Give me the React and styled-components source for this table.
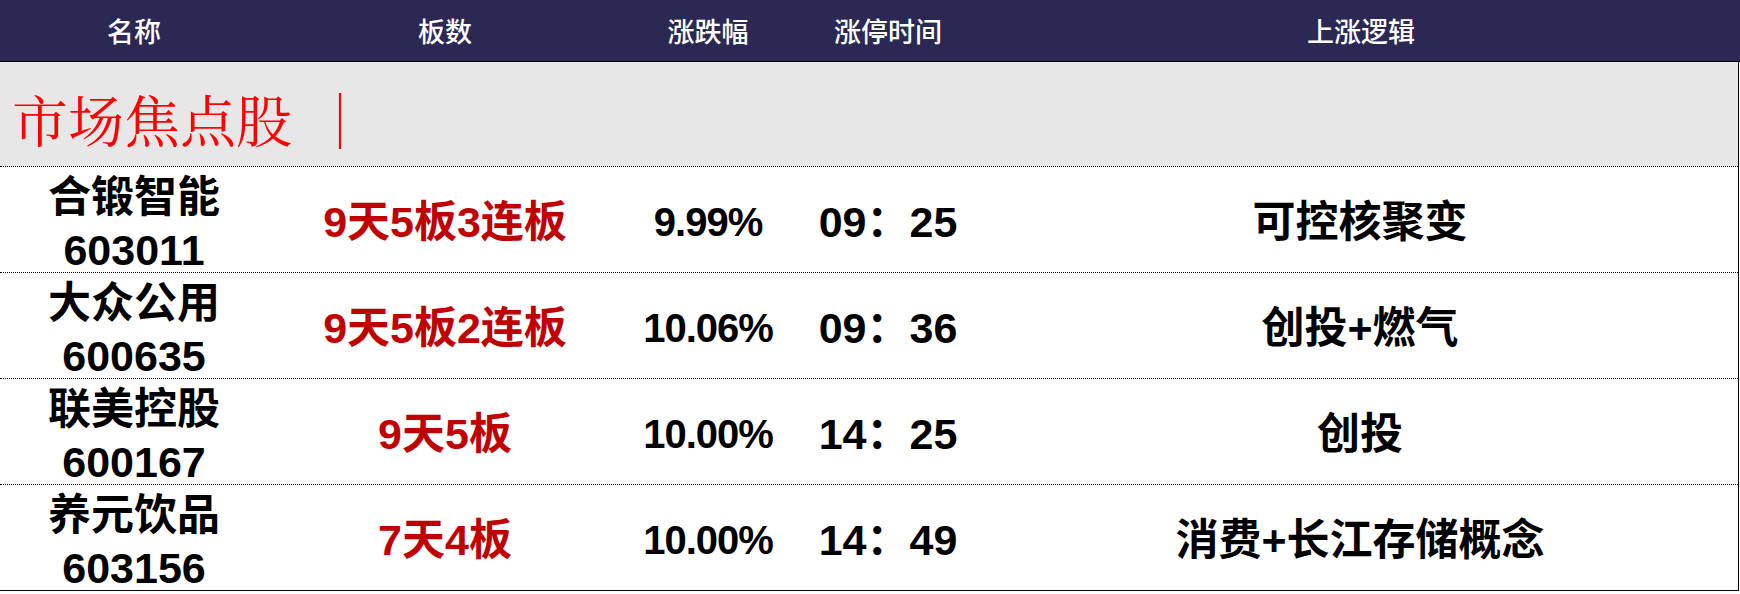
import React from "react"
import styled, { createGlobalStyle } from "styled-components"

//Styles
const GlobalStyle = createGlobalStyle`
  html, body {
    margin: 0;
    padding: 0;
    background: #ffffff;
  }
`
const cols = "268px 354px 172px 188px 1fr"
const cjk = `"Liberation Sans", "Noto Sans CJK SC", sans-serif`

const Table = styled.div`
  width: 1740px;
  font-family: ${cjk};
`
const Header = styled.div`
  display: grid;
  grid-template-columns: ${cols};
  height: 61px;
  background-color: #2b2953;
  border-bottom: 1px solid #000;
  color: #fff;
  font-size: 27px;
  font-weight: 500;
`
const HeadCell = styled.div`
  display: flex;
  align-items: center;
  justify-content: center;
`
const Body = styled.div`
  width: 1739px;
  border-right: 1px solid #000;
  box-sizing: border-box;
`
const Section = styled.div`
  display: flex;
  align-items: center;
  height: 105px;
  padding: 8px 0 0 12px;
  box-sizing: border-box;
  background-color: #e7e7e7;
  border-bottom: 1px dotted #000;
  color: #ff0000;
  font-family: "Noto Serif CJK SC", "Liberation Serif", "Noto Sans CJK SC", serif;
  font-size: 56px;
  white-space: pre;
`
const Bar = styled.span`
  margin-left: 20px;
`
const Row = styled.div`
  display: grid;
  grid-template-columns: ${cols};
  height: 106px;
  box-sizing: border-box;
  border-bottom: 1px ${props => (props.last ? "solid" : "dotted")} #000;
  font-size: 43px;
  font-weight: 700;
  color: #000;
`
const Cell = styled.div`
  display: flex;
  flex-direction: column;
  align-items: center;
  justify-content: center;
  line-height: 53px;
  color: ${props => (props.red ? "#c00000" : "inherit")};
  font-size: ${props => props.size || "inherit"};
  letter-spacing: ${props => props.tight ? "-1px" : "normal"};
  white-space: nowrap;
`
const Name = styled.div`
  padding-top: 4px;
`

const rows = [
  { name: "合锻智能", code: "603011", boards: "9天5板3连板", pct: "9.99%", time: "09：25", logic: "可控核聚变" },
  { name: "大众公用", code: "600635", boards: "9天5板2连板", pct: "10.06%", time: "09：36", logic: "创投+燃气" },
  { name: "联美控股", code: "600167", boards: "9天5板", pct: "10.00%", time: "14：25", logic: "创投" },
  { name: "养元饮品", code: "603156", boards: "7天4板", pct: "10.00%", time: "14：49", logic: "消费+长江存储概念" },
]

const App = () => {
  return (
    <Table>
      <GlobalStyle />
      <Header>
        <HeadCell>名称</HeadCell>
        <HeadCell>板数</HeadCell>
        <HeadCell>涨跌幅</HeadCell>
        <HeadCell>涨停时间</HeadCell>
        <HeadCell>上涨逻辑</HeadCell>
      </Header>
      <Body>
        <Section>
          市场焦点股<Bar>｜</Bar>
        </Section>
        {rows.map((r, i) => (
          <Row key={r.code} last={i === rows.length - 1}>
            <Cell>
              <Name>{r.name}</Name>
              <div>{r.code}</div>
            </Cell>
            <Cell red>{r.boards}</Cell>
            <Cell size="40px" tight>{r.pct}</Cell>
            <Cell>{r.time}</Cell>
            <Cell>{r.logic}</Cell>
          </Row>
        ))}
      </Body>
    </Table>
  )
}

export default App
